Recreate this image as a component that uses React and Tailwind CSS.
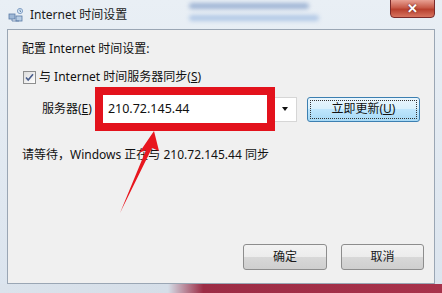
import React from "react";

const font = "font-['Noto_Sans','Noto_Sans_CJK_SC',sans-serif]";

function TitleIcon() {
  return (
    <svg width="16" height="16" viewBox="0 0 16 16">
      <rect x="1" y="7" width="6" height="5" fill="#9fb8d6" stroke="#5a7aa6" strokeWidth="0.8" />
      <rect x="8" y="9" width="6" height="5" fill="#b8cde4" stroke="#5a7aa6" strokeWidth="0.8" />
      <path d="M4 12v2h7" stroke="#5a7aa6" strokeWidth="0.8" fill="none" />
      <circle cx="12" cy="4" r="2.6" fill="#d6e6f5" stroke="#6d8fba" strokeWidth="0.8" />
      <path d="M12 2.6v1.6l1 .6" stroke="#3d5f8c" strokeWidth="0.7" fill="none" />
    </svg>
  );
}

function CheckBox() {
  return (
    <div className="w-[13px] h-[13px] border border-[#8e8f8f] bg-[linear-gradient(135deg,#dcdcdc,#ffffff)] flex items-center justify-center">
      <svg width="9" height="9" viewBox="0 0 9 9">
        <path d="M1 4.5l2.2 2.5L8 1.2" stroke="#4a5e8c" strokeWidth="1.6" fill="none" />
      </svg>
    </div>
  );
}

function WinButton({ children, width }) {
  return (
    <div className={`${width} h-[26px] rounded-[3px] border border-[#8d8d8d] bg-[linear-gradient(#f3f3f3_0%,#ececec_48%,#d8d8d8_50%,#cfcfcf_100%)] flex items-center justify-center text-[12px] text-[#1a1a1a]`}>
      {children}
    </div>
  );
}

export default function App() {
  return (
    <div className={`relative w-[442px] h-[293px] overflow-hidden bg-[linear-gradient(#e9eff5,#dbe4ee)] ${font} text-[12px] leading-[16px] text-[#111]`}>
      {/* title bar */}
      <div className="h-[29px] flex items-start">
        <div className="ml-[8px] mt-[7px]">
          <TitleIcon />
        </div>
        <div className="ml-[6px] mt-[7px] text-[12px] text-[#1b1b1b]">Internet 时间设置</div>
        <div className="ml-[62px] mt-[3px] flex flex-col gap-[6px] blur-[2px] opacity-60">
          <div className="w-[120px] h-[6px] bg-[#6f8fc0] rounded-sm" />
          <div className="w-[130px] h-[6px] bg-[#8fb0dd] rounded-sm" />
        </div>
        <div className="ml-auto mr-[7px] w-[45px] h-[19px] -mt-[1px] rounded-b-[4px] border border-[#7a2a2a] bg-[linear-gradient(#e8a093,#c75a48_45%,#b8402e_55%,#d7735f)] flex items-center justify-center">
          <span className="text-white text-[13px] font-bold leading-none [text-shadow:0_0_2px_#5a1a1a]">✕</span>
        </div>
      </div>

      {/* client area */}
      <div className="mx-[7px] h-[255px] border border-[#9aa6b4] bg-[#f0f0f0] flex flex-col pl-[14px]">
        <div className="mt-[11px]">配置 Internet 时间设置:</div>

        <div className="mt-[12px] flex items-center gap-[3px]">
          <div className="ml-[1px]">
            <CheckBox />
          </div>
          <span>
            与 Internet 时间服务器同步(<span className="underline">S</span>)
          </span>
        </div>

        <div className="mt-[2px] flex items-center">
          <span className="ml-[20px]">
            服务器(<span className="underline">E</span>)
          </span>
          <div className="ml-[3px] w-[180px] h-[44px] border-[8px] border-[#e3121c] bg-white flex items-center pl-[5px] text-[12.5px] text-[#111]">
            210.72.145.44
          </div>
          <div className="w-[22px] h-[25px] bg-white border-y border-r border-[#d6d6d6] flex items-center justify-center">
            <div className="w-0 h-0 border-l-[3.5px] border-r-[3.5px] border-t-[4px] border-l-transparent border-r-transparent border-t-[#111]" />
          </div>
          <div className="ml-[10px] w-[113px] h-[25px] rounded-[3px] border border-[#3c7fb1] bg-[linear-gradient(#eaf6fd_0%,#d9f0fc_48%,#bee6fd_50%,#a7d9f5_100%)] p-[2px]">
            <div className="w-full h-full border border-dotted border-[#333] flex items-center justify-center">
              立即更新(<span className="underline">U</span>)
            </div>
          </div>
        </div>

        <div className="mt-[16px]">请等待，Windows 正在与 210.72.145.44 同步</div>

        <div className="mt-auto mb-[13px] mr-[10px] flex justify-end gap-[14px]">
          <WinButton width="w-[84px]">确定</WinButton>
          <WinButton width="w-[83px]">取消</WinButton>
        </div>
      </div>

      {/* bottom frame */}
      <div className="h-[9px] bg-[linear-gradient(to_right,#dbe3ec_0%,#d5dee8_38%,#9c2c45_46%,#a8324b_100%)]" />

      {/* annotation arrow */}
      <svg className="absolute left-0 top-0 pointer-events-none" width="442" height="293" viewBox="0 0 442 293">
        <polygon points="154,131 159,151 152,148 120,213 146,150 139,153" fill="#e8161e" />
      </svg>
    </div>
  );
}
